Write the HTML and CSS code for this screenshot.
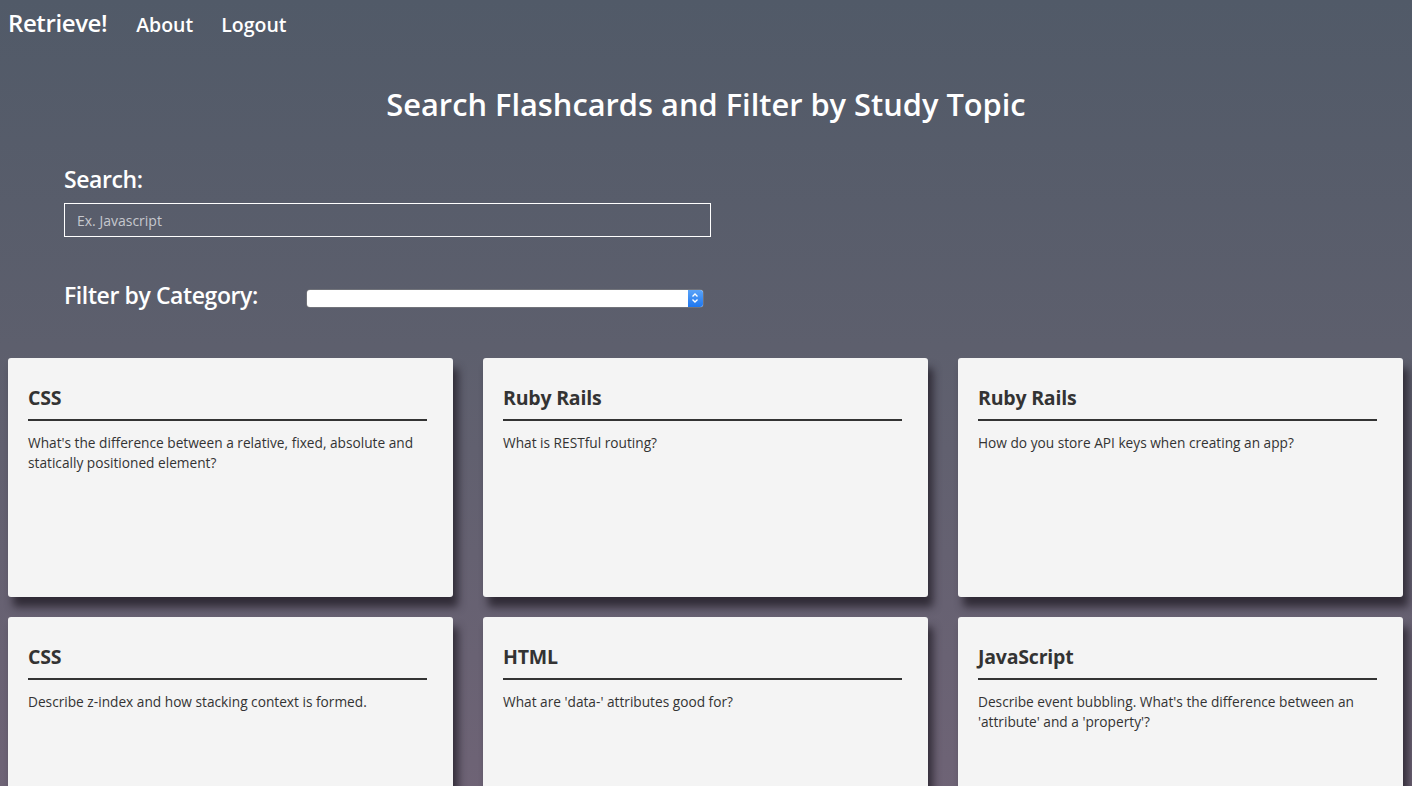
FILE: index.html
```html
<!DOCTYPE html>
<html>
<head>
<meta charset="utf-8">
<title>Retrieve!</title>
<link rel="stylesheet" href="styles.css">
</head>
<body>
<nav class="nav">
  <a class="brand" href="#">Retrieve!</a>
  <a class="nav-link" href="#">About</a>
  <a class="nav-link" href="#">Logout</a>
</nav>
<h1 class="title">Search Flashcards and Filter by Study Topic</h1>
<section class="controls">
  <label class="label" for="search">Search:</label>
  <input class="search" id="search" type="text" placeholder="Ex. Javascript">
  <div class="filter-row">
    <span class="label">Filter by Category:</span>
    <div class="select">
      <span class="select-btn">
        <svg width="8" height="12" viewBox="0 0 8 12"><path d="M1.5 4.5 L4 2 L6.5 4.5 M1.5 7.5 L4 10 L6.5 7.5" fill="none" stroke="#fff" stroke-width="1.4"/></svg>
      </span>
    </div>
  </div>
</section>
<main class="grid">
  <div class="card"><h2 class="card-title">CSS</h2><p class="card-text">What's the difference between a relative, fixed, absolute and statically positioned element?</p></div>
  <div class="card"><h2 class="card-title">Ruby Rails</h2><p class="card-text">What is RESTful routing?</p></div>
  <div class="card"><h2 class="card-title">Ruby Rails</h2><p class="card-text">How do you store API keys when creating an app?</p></div>
  <div class="card"><h2 class="card-title">CSS</h2><p class="card-text">Describe z-index and how stacking context is formed.</p></div>
  <div class="card"><h2 class="card-title">HTML</h2><p class="card-text">What are 'data-' attributes good for?</p></div>
  <div class="card"><h2 class="card-title">JavaScript</h2><p class="card-text">Describe event bubbling. What's the difference between an 'attribute' and a 'property'?</p></div>
</main>
</body>
</html>
```
FILE: styles.css
```css
html {
  min-height: 100%;
  background: linear-gradient(to bottom, #515a68 0%, #5d5f6d 40%, #716477 100%);
}
body {
  margin: 0;
  padding: 0 8px 8px;
  font-family: "Open Sans", "Noto Sans", sans-serif;
  color: #fff;
  min-height: 786px;
  box-sizing: border-box;
}
.nav {
  display: flex;
  align-items: baseline;
  height: 48px;
  padding-top: 6px;
  box-sizing: border-box;
}
.nav a { color: #fff; text-decoration: none; }
.brand { font-size: 24px; font-weight: 600; margin-right: 29px; letter-spacing: -0.4px; }
.nav-link { font-size: 19.5px; font-weight: 600; margin-right: 28px; }
.title {
  text-align: center;
  font-size: 30.8px;
  font-weight: 600;
  margin: 36px 0 0;
  line-height: 40px;
}
.controls {
  padding-left: 56px;
  margin-top: 39px;
}
.label {
  display: block;
  font-size: 23px;
  font-weight: 600;
  line-height: 32px;
  letter-spacing: -0.4px;
}
.search {
  display: block;
  margin-top: 8px;
  width: 647px;
  height: 34px;
  box-sizing: border-box;
  border: 1px solid #fff;
  background: transparent;
  color: #fff;
  padding: 0 12px;
  font-family: inherit;
  font-size: 14px;
}
.search::placeholder { color: #c6c8ce; }
.filter-row {
  display: flex;
  align-items: center;
  margin-top: 42px;
}
.select {
  margin-left: 49px;
  width: 396px;
  height: 17px;
  background: #fff;
  border-radius: 3px;
  display: flex;
  justify-content: flex-end;
  box-shadow: 0 0 0 0.5px #888;
  position: relative;
  top: 3px;
}
.select-btn {
  width: 15px;
  height: 17px;
  background: linear-gradient(#5aa3f8, #1f77ef);
  border-radius: 0 3px 3px 0;
  display: flex;
  align-items: center;
  justify-content: center;
}
.grid {
  display: grid;
  grid-template-columns: repeat(3, 445px);
  column-gap: 30px;
  row-gap: 20px;
  margin-top: 47px;
}
.card {
  background: #f4f4f4;
  border-radius: 3px;
  height: 239px;
  padding: 25px 26px 0 20px;
  box-sizing: border-box;
  color: #333;
  box-shadow: 5px 10px 9px rgba(35, 30, 40, 0.8);
}
.card-title {
  font-size: 19.5px;
  font-weight: 700;
  margin: 0;
  line-height: 30px;
  padding-bottom: 6px;
  border-bottom: 2px solid #333;
  letter-spacing: -0.2px;
}
.card-text {
  font-size: 13.7px;
  line-height: 20px;
  margin: 12px 0 0;
  color: #333;
}
```
